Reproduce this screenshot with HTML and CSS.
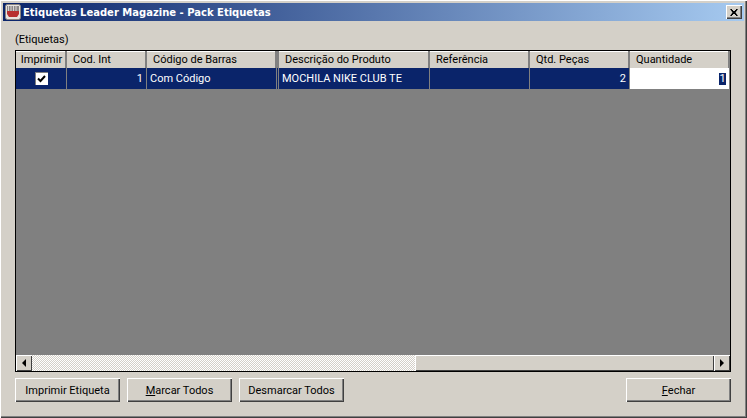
FILE: index.html
```html
<!DOCTYPE html>
<html>
<head>
<title>Etiquetas Leader Magazine - Pack Etiquetas</title>
<link rel="stylesheet" href="styles.css">
</head>
<body>

<div class="window">
  <div class="titlebar">
    <svg class="app-icon" width="16" height="16" viewBox="0 0 16 16">
      <rect x="0.5" y="0.5" width="15" height="15" rx="2" fill="#e8e4e0" stroke="#8a8480"/>
      <rect x="2" y="2" width="12" height="5" fill="#8c8888"/>
      <path d="M3.5 2v5M6 2v5M8.5 2v5M11 2v5" stroke="#d8d4d4"/>
      <path d="M2 7h12v3l-2 3H4l-2-3z" fill="#b83030"/>
    </svg>
    <span class="title-text">Etiquetas Leader Magazine - Pack Etiquetas</span>
    <button class="close-btn">
      <svg width="8" height="7" viewBox="0 0 8 7"><path d="M0 0h2v1h1v1h2V1h1V0h2L5.500 3.500 8 7H6V6H5V5H3v1H2v1H0l2.500-3.500z" fill="#000"/></svg>
    </button>
  </div>

  <div class="content">
    <div class="group-label">(Etiquetas)</div>

    <div class="grid">
      <div class="row header-row">
        <div class="cell">Imprimir</div>
        <div class="cell left">Cod. Int</div>
        <div class="cell left">Código de Barras</div>
        <div class="cell"></div>
        <div class="cell left">Descrição do Produto</div>
        <div class="cell left">Referência</div>
        <div class="cell left">Qtd. Peças</div>
        <div class="cell left">Quantidade</div>
      </div>
      <div class="row data-row">
        <div class="cell"><span class="check"><svg width="9" height="8" viewBox="0 0 9 8"><path d="M1 3.500l2.500 2.500L8 1" fill="none" stroke="#000" stroke-width="2"/></svg></span></div>
        <div class="cell num">1</div>
        <div class="cell text">Com Código</div>
        <div class="cell"></div>
        <div class="cell text">MOCHILA NIKE CLUB TE</div>
        <div class="cell text"></div>
        <div class="cell num">2</div>
        <div class="cell edit"><span class="selected">1</span></div>
      </div>
      <div class="grid-empty"></div>
      <div class="scrollbar">
        <div class="sb-btn"><i class="arrow arrow-left"></i></div>
        <div class="sb-track"></div>
        <div class="sb-thumb"></div>
        <div class="sb-btn"><i class="arrow arrow-right"></i></div>
      </div>
    </div>

    <div class="buttons">
      <button class="btn">Imprimir Etiqueta</button>
      <button class="btn"><u>M</u>arcar Todos</button>
      <button class="btn">Desmarcar Todos</button>
      <button class="btn btn-close"><u>F</u>echar</button>
    </div>
  </div>
</div>

</body>
</html>
```

FILE: styles.css
```css
html, body {
  height: 100%;
  margin: 0;
}

body {
  background: #d4d0c8;
  font-family: Roboto, "Liberation Sans", Arial, sans-serif;
  font-size: 11px;
  color: #000;
}

.window {
  height: 100%;
  box-sizing: border-box;
  display: flex;
  flex-direction: column;
  padding: 3px;
  background: #d4d0c8;
  box-shadow: inset 1px 1px 0 #fff, inset -1px -1px 0 #404040, inset -2px -2px 0 #808080;
}

.titlebar {
  height: 18px;
  flex: none;
  display: flex;
  align-items: center;
  padding: 0 2px;
  background: linear-gradient(to right, #0a246a, #a6caf0);
  color: #fff;
}

.app-icon {
  flex: none;
  margin-right: 2px;
}

.title-text {
  flex: 1;
  font-family: "DejaVu Sans", sans-serif;
  font-size: 10px;
  font-weight: bold;
  white-space: nowrap;
}

.close-btn {
  width: 16px;
  height: 14px;
  padding: 0;
  border: 0;
  display: flex;
  align-items: center;
  justify-content: center;
  background: #d4d0c8;
  box-shadow: inset 1px 1px 0 #fff, inset -1px -1px 0 #404040, inset -2px -2px 0 #808080;
}

.content {
  flex: 1;
  display: flex;
  flex-direction: column;
  padding: 12px 13px 12px 12px;
}

.group-label {
  height: 17px;
  line-height: 13px;
}

.grid {
  height: 322px;
  box-sizing: border-box;
  display: flex;
  flex-direction: column;
  border: 1px solid #000;
  background: #808080;
}

.row {
  display: grid;
  grid-template-columns: 51px 80px 130px 2px 151px 100px 100px 100px;
  flex: none;
}

.header-row {
  height: 17px;
  background: #d4d0c8;
  box-shadow: inset 0 1px 0 #fff;
}

.header-row .cell {
  line-height: 17px;
  text-align: center;
  box-shadow: inset -2px 0 0 #808080, inset -1px 0 0 #fff;
}

.header-row .left {
  text-align: left;
  padding-left: 6px;
}

.data-row {
  height: 22px;
  background: #0a246a;
  color: #fff;
}

.data-row .cell {
  line-height: 21px;
  border-right: 1px solid #808080;
  border-bottom: 1px solid #808080;
  white-space: nowrap;
  overflow: hidden;
}

.cell {
  box-sizing: border-box;
}

.text {
  padding-left: 3px;
}

.num {
  text-align: right;
  padding-right: 3px;
}

.data-row .check {
  width: 13px;
  height: 13px;
  box-sizing: border-box;
  margin: 4px auto 0;
  display: flex;
  align-items: center;
  justify-content: center;
  background: #fff;
  box-shadow: inset 1px 1px 0 #808080;
}

.data-row .edit {
  background: #fff;
  color: #000;
  text-align: right;
  padding-right: 3px;
}

.selected {
  display: inline-block;
  width: 7px;
  height: 12px;
  line-height: 12px;
  text-align: center;
  vertical-align: middle;
  background: #0a246a;
  color: #fff;
}

.grid-empty {
  flex: 1;
}

.scrollbar {
  height: 16px;
  flex: none;
  display: flex;
}

.sb-btn, .sb-thumb {
  box-sizing: border-box;
  background: #d4d0c8;
  box-shadow: inset 1px 1px 0 #fff, inset -1px -1px 0 #404040;
}

.sb-btn {
  width: 16px;
  display: flex;
  align-items: center;
  justify-content: center;
}

.sb-track {
  width: 383px;
  background: repeating-conic-gradient(#fff 0 25%, #d4d0c8 0 50%) 0 0 / 2px 2px;
}

.sb-thumb {
  flex: 1;
}

.arrow {
  width: 0;
  height: 0;
  border-top: 4px solid transparent;
  border-bottom: 4px solid transparent;
}

.arrow-left {
  border-right: 4px solid #000;
}

.arrow-right {
  border-left: 4px solid #000;
}

.buttons {
  display: flex;
  gap: 7px;
  margin-top: 6px;
}

.btn {
  width: 105px;
  height: 24px;
  padding: 0;
  border: 0;
  background: #d4d0c8;
  font: inherit;
  color: #000;
  box-shadow: inset 1px 1px 0 #fff, inset -1px -1px 0 #404040, inset -2px -2px 0 #808080;
}

.btn-close {
  margin-left: auto;
}
```
